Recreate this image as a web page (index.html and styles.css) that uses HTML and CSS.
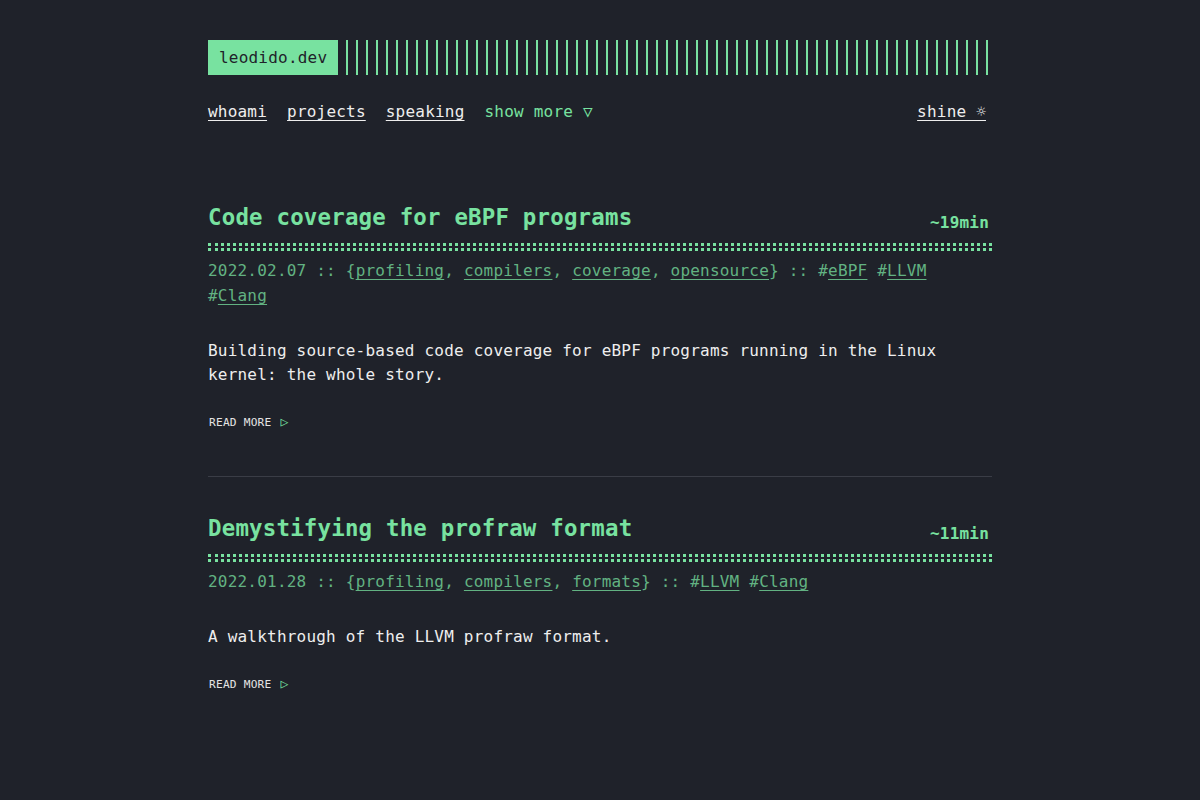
FILE: index.html
```html
<!DOCTYPE html>
<html lang="en">
  <head>
    <meta charset="UTF-8" />
    <meta name="viewport" content="width=device-width, initial-scale=1.0" />
    <title>leodido.dev</title>
    <link rel="stylesheet" href="styles.css">
  </head>
  <body>
    <div class="container">
      <header class="header">
        <div class="header-top">
          <a class="logo" href="#">leodido.dev</a>
          <span class="logo-bars"></span>
        </div>
        <nav class="menu">
          <ul class="menu-list">
            <li><a href="#">whoami</a></li>
            <li><a href="#">projects</a></li>
            <li><a href="#">speaking</a></li>
            <li class="menu-more">show more ▽</li>
          </ul>
          <a class="theme-toggle" href="#">shine ☼</a>
        </nav>
      </header>

      <main class="posts">
        <article class="post">
          <header class="post-header">
            <div class="post-head-row">
              <h1 class="post-title"><a href="#">Code coverage for eBPF programs</a></h1>
              <span class="post-time">~19min</span>
            </div>
          </header>
          <div class="post-meta">
            2022.02.07 :: {<a href="#">profiling</a>, <a href="#">compilers</a>, <a href="#">coverage</a>, <a href="#">opensource</a>} :: #<a href="#">eBPF</a> #<a href="#">LLVM</a> #<a href="#">Clang</a>
          </div>
          <p class="post-content">Building source-based code coverage for eBPF programs running in the Linux kernel: the whole story.</p>
          <a class="read-more" href="#">READ MORE <span class="arrow">▷</span></a>
        </article>

        <hr class="post-sep" />

        <article class="post">
          <header class="post-header">
            <div class="post-head-row">
              <h1 class="post-title"><a href="#">Demystifying the profraw format</a></h1>
              <span class="post-time">~11min</span>
            </div>
          </header>
          <div class="post-meta">
            2022.01.28 :: {<a href="#">profiling</a>, <a href="#">compilers</a>, <a href="#">formats</a>} :: #<a href="#">LLVM</a> #<a href="#">Clang</a>
          </div>
          <p class="post-content">A walkthrough of the LLVM profraw format.</p>
          <a class="read-more" href="#">READ MORE <span class="arrow">▷</span></a>
        </article>
      </main>
    </div>
  </body>
</html>
```

FILE: styles.css
```css
body {
  margin: 0;
  padding: 0;
  background-color: #1f222a;
  color: #eeeeee;
  font-family: "DejaVu Sans Mono", "Liberation Mono", monospace;
  font-size: 16px;
  letter-spacing: 0.013em;
  line-height: 24px;
}
a {
  color: inherit;
}
.container {
  max-width: 864px;
  margin: 0 auto;
  padding: 40px;
  box-sizing: border-box;
}

/* header */
.header-top {
  display: flex;
}
.logo {
  background: #78e2a0;
  color: #1f222a;
  padding: 5px 11px;
  line-height: 25px;
  text-decoration: none;
}
.logo-bars {
  flex: 1;
  margin-left: 8px;
  background: repeating-linear-gradient(90deg, #78e2a0 0, #78e2a0 2px, transparent 2px, transparent 10px);
}
.menu {
  display: flex;
  justify-content: space-between;
  margin-top: 25px;
}
.menu-list {
  display: flex;
  gap: 20px;
  list-style: none;
  margin: 0;
  padding: 0;
}
.menu-list a,
.theme-toggle {
  text-underline-offset: 3px;
}
.menu-more {
  color: #78e2a0;
}
.theme-toggle {
  margin-right: 6px;
}

/* posts */
.posts {
  margin-top: 79px;
}
.post-head-row {
  display: flex;
  justify-content: space-between;
  align-items: flex-start;
}
.post-header {
  border-bottom: 3px dotted #78e2a0;
}
.post-header::after {
  content: "";
  display: block;
  margin-top: 10px;
  margin-bottom: 2px;
  border-bottom: 3px dotted #78e2a0;
}
.post-title {
  margin: 0;
  font-size: 22.4px;
  line-height: 29px;
  font-weight: bold;
}
.post-title a {
  color: #78e2a0;
  text-decoration: none;
}
.post-time {
  color: #78e2a0;
  font-weight: bold;
  line-height: 20px;
  padding-top: 10px;
  margin-right: 3px;
}
.post-meta {
  margin-top: 7px;
  line-height: 25px;
  color: #62b282;
}
.post-meta a {
  text-underline-offset: 3px;
}
.post-content {
  margin: 31px 0 0;
}
.read-more {
  display: block;
  margin-top: 25px;
  font-size: 11.2px;
  line-height: 20px;
  text-decoration: none;
  padding-left: 1px;
  color: #e4e4e4;
}
.read-more .arrow {
  color: #78e2a0;
  font-size: 13px;
  margin-left: 2px;
}
.post-sep {
  border: 0;
  border-top: 1px solid #3a3d46;
  margin: 43px 0 37px;
}
```
